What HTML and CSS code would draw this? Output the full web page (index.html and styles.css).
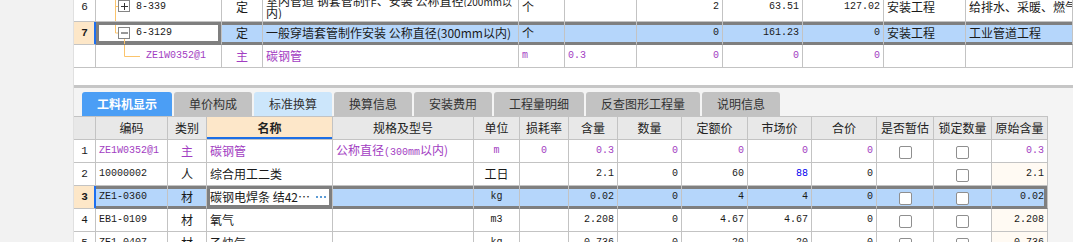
FILE: index.html
```html
<!DOCTYPE html>
<html lang="zh-CN">
<head>
	<meta charset="UTF-8">
	<title>工料机显示</title>
	<link rel="stylesheet" href="styles.css">
</head>
<body>
	<div class="side"></div>
	<div class="main">
		<!-- 上面的定额列表 -->
		<div class="top">
			<div class="top-grid">
				<table class="grid grid-top">
					<colgroup>
						<col style="width:22px"><col style="width:126px"><col style="width:41px"><col style="width:256px">
						<col style="width:46px"><col style="width:72px"><col style="width:86px"><col style="width:80px">
						<col style="width:81px"><col style="width:82px"><col style="width:107px">
					</colgroup>
					<tr class="tall">
						<td class="rn">6</td>
						<td class="code">
							<div class="tree">
								<svg width="38" height="29" viewBox="0 0 38 29">
									<path d="M19.5 0V29M19.5 14.5H22" stroke="#fbc46c" fill="none"/>
									<rect x="22.5" y="8.5" width="11" height="11" fill="#fff" stroke="#858585"/>
									<path d="M25 14.5H32M28.5 11V18" stroke="#333" fill="none"/>
								</svg>
								<span class="m">8-339</span>
							</div>
						</td>
						<td class="c">定</td>
						<td class="wrap"><span class="line">室内管道 钢套管制作、安装 公称直径<small>(200mm以</small></span><span class="line">内)</span></td>
						<td>个</td>
						<td></td>
						<td class="n">2</td>
						<td class="n">63.51</td>
						<td class="n">127.02</td>
						<td>安装工程</td>
						<td>给排水、采暖、燃气工程</td>
					</tr>
					<tr class="sel">
						<td class="rn">7</td>
						<td class="code cur">
							<div class="tree">
								<svg width="38" height="22" viewBox="0 0 38 22">
									<path d="M19.5 3V11M19.5 11H22M28.5 16.5V22" stroke="#fbc46c" fill="none"/>
									<rect x="22.5" y="5.5" width="11" height="11" fill="#fff" stroke="#858585"/>
									<path d="M25 11H32" stroke="#333" fill="none"/>
								</svg>
								<span class="m">6-3129</span>
							</div>
						</td>
						<td class="c">定</td>
						<td>一般穿墙套管制作安装 公称直径(300mm以内)</td>
						<td>个</td>
						<td></td>
						<td class="n">0</td>
						<td class="n">161.23</td>
						<td class="n">0</td>
						<td>安装工程</td>
						<td>工业管道工程</td>
					</tr>
					<tr>
						<td class="rn"></td>
						<td class="code">
							<div class="tree">
								<svg width="48" height="22" viewBox="0 0 48 22">
									<path d="M28.5 0V11.5H44" stroke="#fbc46c" fill="none"/>
								</svg>
								<span class="m p">ZE1W0352@1</span>
							</div>
						</td>
						<td class="c p">主</td>
						<td class="p">碳钢管</td>
						<td class="m p">m</td>
						<td class="m p">0.3</td>
						<td class="n p">0</td>
						<td class="n p">0</td>
						<td class="n p">0</td>
						<td></td>
						<td></td>
					</tr>
				</table>
			</div>
		</div>
		<div class="split"></div>
		<!-- 下面的工料机 -->
		<div class="bottom">
			<ul class="tabs">
				<li class="on">工料机显示</li>
				<li>单价构成</li>
				<li class="lt">标准换算</li>
				<li>换算信息</li>
				<li>安装费用</li>
				<li>工程量明细</li>
				<li>反查图形工程量</li>
				<li>说明信息</li>
			</ul>
			<table class="grid grid-bottom">
				<colgroup>
					<col style="width:22px"><col style="width:72px"><col style="width:39px"><col style="width:126px">
					<col style="width:141px"><col style="width:46px"><col style="width:49px"><col style="width:49px">
					<col style="width:64px"><col style="width:66px"><col style="width:64px"><col style="width:65px">
					<col style="width:57px"><col style="width:58px"><col style="width:56px">
				</colgroup>
				<tr class="head">
					<th></th><th>编码</th><th>类别</th><th class="key">名称</th><th>规格及型号</th><th>单位</th>
					<th>损耗率</th><th>含量</th><th>数量</th><th>定额价</th><th>市场价</th><th>合价</th>
					<th>是否暂估</th><th>锁定数量</th><th>原始含量</th>
				</tr>
				<tr>
					<td class="rn">1</td>
					<td class="m p">ZE1W0352@1</td>
					<td class="c p">主</td>
					<td class="p">碳钢管</td>
					<td class="p">公称直径<span class="m">(300mm</span>以内)</td>
					<td class="m c p">m</td>
					<td class="m c p">0</td>
					<td class="n p">0.3</td>
					<td class="n p">0</td>
					<td class="n p">0</td>
					<td class="n p">0</td>
					<td class="n p">0</td>
					<td class="c"><span class="cb"></span></td>
					<td class="c"><span class="cb"></span></td>
					<td class="n p">0.3</td>
				</tr>
				<tr>
					<td class="rn">2</td>
					<td class="m">10000002</td>
					<td class="c">人</td>
					<td>综合用工二类</td>
					<td></td>
					<td class="c">工日</td>
					<td></td>
					<td class="n">2.1</td>
					<td class="n">0</td>
					<td class="n">60</td>
					<td class="n blue">88</td>
					<td class="n">0</td>
					<td></td>
					<td class="c"><span class="cb"></span></td>
					<td class="n orig">2.1</td>
				</tr>
				<tr class="sel">
					<td class="rn">3</td>
					<td class="m">ZE1-0360</td>
					<td class="c">材</td>
					<td class="cur"><div class="edit"><span class="txt">碳钢电焊条 结42…</span><span class="dots"><i></i><i></i><i></i></span></div></td>
					<td></td>
					<td class="m c">kg</td>
					<td></td>
					<td class="n">0.02</td>
					<td class="n">0</td>
					<td class="n">4</td>
					<td class="n">4</td>
					<td class="n">0</td>
					<td class="c"><span class="cb"></span></td>
					<td class="c"><span class="cb"></span></td>
					<td class="n orig">0.02</td>
				</tr>
				<tr>
					<td class="rn">4</td>
					<td class="m">EB1-0109</td>
					<td class="c">材</td>
					<td>氧气</td>
					<td></td>
					<td class="m c">m3</td>
					<td></td>
					<td class="n">2.208</td>
					<td class="n">0</td>
					<td class="n">4.67</td>
					<td class="n">4.67</td>
					<td class="n">0</td>
					<td class="c"><span class="cb"></span></td>
					<td class="c"><span class="cb"></span></td>
					<td class="n orig">2.208</td>
				</tr>
				<tr>
					<td class="rn">5</td>
					<td class="m">ZE1-0407</td>
					<td class="c">材</td>
					<td>乙炔气</td>
					<td></td>
					<td class="m c">kg</td>
					<td></td>
					<td class="n">0.736</td>
					<td class="n">0</td>
					<td class="n">20</td>
					<td class="n">20</td>
					<td class="n">0</td>
					<td class="c"><span class="cb"></span></td>
					<td class="c"><span class="cb"></span></td>
					<td class="n orig">0.736</td>
				</tr>
			</table>
		</div>
	</div>
</body>
</html>
```

FILE: styles.css
```css
*{margin:0; padding:0; box-sizing:border-box;}
li{list-style:none;}

body{width:1073px; height:242px; overflow:hidden; display:flex; background:#f2f2f2; font:12px/14px "Noto Sans CJK SC", sans-serif; color:#1a1a1a;}
.side{width:74px; flex:none; background:#f2f2f2; border-right:1px solid #e0e0e0;}
.main{flex:1; min-width:0; display:flex; flex-direction:column;}

.top{height:85px; flex:none; background:#fff;}
.top-grid{height:69px; overflow:hidden;}
.grid-top{width:999px; margin-top:-8px;}
.split{height:3px; flex:none; background:#c6c6c6;}
.bottom{flex:1; background:#f4f4f4; padding-top:4px;}

.tabs{display:flex; gap:2px; padding-left:8px; height:24px;}
.tabs li{padding:0 15px; line-height:24px; background:#c2c2c2; border-radius:3px 3px 0 0; color:#333;}
.tabs .on{background:#4b9ef5; color:#fff; font-weight:bold;}
.tabs .lt{background:#cce6fb;}

.grid{border-collapse:separate; border-spacing:0; table-layout:fixed;}
.grid-bottom{width:974px; border-top:1px solid #c3c3c3; background:#fff;}
.grid td, .grid th{height:23px; padding:0 3px; border-right:1px solid #c3c3c3; border-bottom:1px solid #c3c3c3; white-space:nowrap; overflow:hidden; text-align:left; font-weight:normal; vertical-align:middle;}
.grid .tall td{height:30px;}
.grid .wrap{line-height:12px; vertical-align:top; padding-top:3px;}
.wrap .line{display:block; height:12px; overflow:hidden;}
.wrap small{font-size:10px;}

.head th{background:#e8e8e8; text-align:center; color:#222;}
.head .key{background:#fde7c9; font-weight:bold; box-shadow:inset 0 -2px #1d6fe6;}

.grid .rn{text-align:center; padding:0; font-family:"Liberation Mono", monospace; font-size:11px;}
.grid .code{padding:0;}
.tree{display:flex; align-items:center; gap:2px; height:100%;}
.tree svg{display:block; flex:none;}

.m{font-family:"Liberation Mono", "Noto Sans CJK SC", monospace; font-size:10px;}
.grid .n{font-family:"Liberation Mono", monospace; font-size:10px; text-align:right;}
.grid .c{text-align:center;}
.p{color:#a23dc2;}
.blue{color:#0000f0; font-weight:bold;}
.orig{background:#fffaf3;}

.cb{display:inline-block; width:13px; height:13px; border:1px solid #8f8f8f; border-radius:2px; background:#fff; vertical-align:middle;}

.sel td{background:#b5d6fb; box-shadow:inset 0 3px #7f7f7f, inset 0 -2px #7f7f7f; border-bottom-color:#7f7f7f;}
.sel td:last-child{box-shadow:inset 0 3px #7f7f7f, inset 0 -2px #7f7f7f, inset -3px 0 #7f7f7f;}
.grid-top .sel td:last-child{box-shadow:inset 0 3px #7f7f7f, inset 0 -2px #7f7f7f;}
.sel .rn{background:#fde7c8; font-weight:bold; box-shadow:inset -1px 0 #1d6ff0; border-right-color:#1d6ff0; border-bottom-color:#c3c3c3;}
.sel .cur{background:#fff; box-shadow:inset 0 0 0 3px #7f7f7f;}
.edit{display:flex; align-items:center; gap:4px;}
.edit .txt{flex:1; min-width:0; overflow:hidden;}
.dots{flex:none; display:flex; gap:2px; padding-right:3px;}
.dots i{width:2px; height:2px; background:#5b9bd5;}
```
